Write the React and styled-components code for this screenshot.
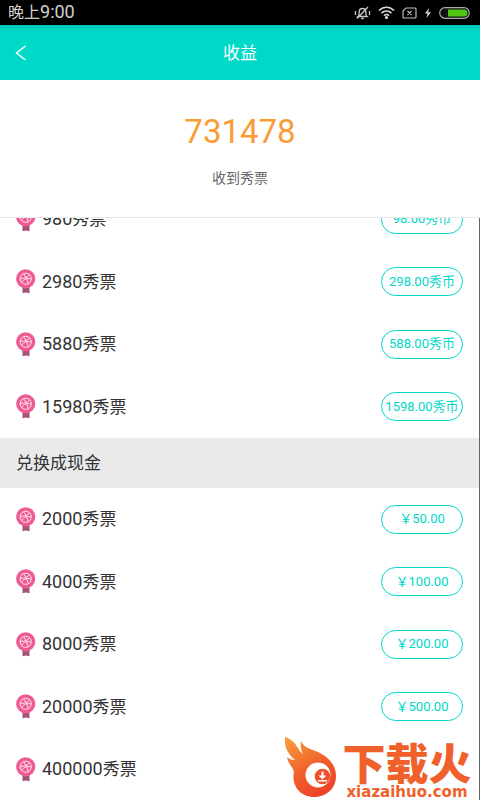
// App.jsx
import React, { useLayoutEffect, useRef } from 'react';
import styled, { createGlobalStyle } from 'styled-components';

const TEAL = '#00d8c8';

const coinRows = [
  { tickets: 980, price: '98.00秀币' },
  { tickets: 2980, price: '298.00秀币' },
  { tickets: 5880, price: '588.00秀币' },
  { tickets: 15980, price: '1598.00秀币' },
];

const cashRows = [
  { tickets: 2000, price: '￥50.00' },
  { tickets: 4000, price: '￥100.00' },
  { tickets: 8000, price: '￥200.00' },
  { tickets: 20000, price: '￥500.00' },
  { tickets: 400000, price: '￥10000.00' },
];

const GlobalStyle = createGlobalStyle`
  * {
    box-sizing: border-box;
  }

  body {
    margin: 0;
    background: #fff;
    color: #333;
    font-family: Roboto, 'Noto Sans CJK SC', sans-serif;
  }

  h1, h2, p, ul {
    margin: 0;
    padding: 0;
    font-weight: 400;
  }
`;

const Screen = styled.div`
  display: flex;
  flex-direction: column;
  height: 100vh;
  overflow: hidden;
`;

const StatusBar = styled.div`
  display: flex;
  align-items: center;
  justify-content: space-between;
  flex: none;
  height: 25px;
  padding: 0 10px 0 8px;
  background: #000;
  color: #d4d0ce;
  font-size: 16px;
  line-height: 24px;
`;

const StatusIcons = styled.div`
  display: flex;
  align-items: center;
  gap: 7px;

  svg {
    display: block;
  }
`;

/* numerals run a touch larger than the Chinese text beside them */
const Digits = styled.span`
  font-size: 18px;
`;

const Header = styled.header`
  display: grid;
  grid-template-columns: 44px 1fr 44px;
  align-items: center;
  flex: none;
  height: 55px;
  background: linear-gradient(#00c9b9, ${TEAL} 6px);
  color: #fff;

  h1 {
    font-size: 17px;
    line-height: 24px;
    text-align: center;
  }
`;

const BackButton = styled.button`
  display: flex;
  align-items: center;
  height: 44px;
  padding: 0 0 0 15px;
  border: 0;
  background: none;
  color: inherit;
`;

const Summary = styled.section`
  display: flex;
  flex-direction: column;
  align-items: center;
  flex: none;
  gap: 16px;
  height: 138px;
  padding-top: 32px;
  border-bottom: 1px solid #e8e8e8;
`;

const Total = styled.p`
  color: #fb9b36;
  font-size: 33px;
  line-height: 40px;
`;

const Caption = styled.p`
  color: #666;
  font-size: 14px;
  line-height: 20px;
`;

const Scroller = styled.main`
  flex: 1;
  min-height: 0;
  overflow-y: auto;
  border-right: 1px solid #666;
  scrollbar-width: none;
`;

const List = styled.ul`
  list-style: none;
`;

const Row = styled.li`
  display: flex;
  align-items: center;
  gap: 6px;
  height: 62px;
  padding: 0 16px;

  &:nth-child(even) {
    height: 63px;
  }
`;

const Amount = styled.span`
  flex: 1;
  font-size: 17px;
  line-height: 24px;
`;

const PriceButton = styled.button`
  flex: none;
  width: 82px;
  height: 29px;
  padding: 0;
  border: 1px solid ${TEAL};
  border-radius: 15px;
  background: #fff;
  color: ${TEAL};
  font-family: inherit;
  font-size: 13px;
  line-height: 20px;
  white-space: nowrap;
`;

const SectionTitle = styled.h2`
  height: 50px;
  padding: 0 16px;
  background: #eaeaea;
  font-size: 17px;
  line-height: 50px;
`;

const Watermark = styled.div`
  position: absolute;
  right: 6px;
  bottom: 0;
  display: flex;
  align-items: flex-end;
  height: 66px;
  background: rgba(255, 255, 255, 0.94);
`;

const Brand = styled.div`
  display: flex;
  flex-direction: column;
  align-items: center;
  width: 134px;
  color: #f0602a;
`;

const BrandName = styled.div`
  height: 38px;
  font-size: 43px;
  font-weight: 900;
  line-height: 38px;
  white-space: nowrap;
`;

const BrandSite = styled.div`
  font-family: 'DejaVu Sans', sans-serif;
  font-size: 15px;
  font-weight: 700;
  line-height: 16px;
`;

function Medal() {
  return (
    <svg width="20" height="25" viewBox="0 0 20 25" aria-hidden="true">
      <path d="M6.500 16h7v8.200l-3.500-.8-3.500.8z" fill="#a4547a" />
      <circle cx="9.700" cy="9.800" r="9.600" fill="#ee5b93" />
      <g fill="none" stroke="#ffe3ee" strokeWidth="1">
        <circle cx="9.700" cy="9.800" r="5.600" />
        <path d="M4.200 9.300c4.500.3 8-1 9.500-4M7.500 4.700c2.500 3 4 6.300 4.600 10M5.700 13.800c1.500-3.600 5-5 9.500-3.800" />
      </g>
    </svg>
  );
}

function PhoneStatus() {
  return (
    <StatusIcons aria-hidden="true">
      <svg width="17" height="14" viewBox="0 0 17 14" fill="none" stroke="#c8c8c8" strokeWidth="1.300">
        <path d="M4 10.500h9c-1.300-1-1.200-2.500-1.200-4.500 0-2.200-1.400-3.500-3.300-3.500S5.200 3.800 5.200 6c0 2 .1 3.500-1.200 4.500zM7.300 12.500h2.400M14 1 3 12.500M1.500 5v4M15.500 5v4" />
      </svg>
      <svg width="17" height="13" viewBox="0 0 17 13" fill="none" stroke="#d8d8d8" strokeWidth="1.600">
        <path d="M1 4.500c4.500-4.300 10.500-4.300 15 0M3.500 7.200c3-2.900 7-2.900 10 0M6 9.700c1.500-1.500 3.500-1.500 5 0" />
        <circle cx="8.500" cy="11.500" r=".8" fill="#d8d8d8" />
      </svg>
      <svg width="15" height="12" viewBox="0 0 15 12" fill="none" stroke="#bdbdbd" strokeWidth="1.200">
        <path d="M4 1h9q1 0 1 1v8q0 1-1 1H2q-1 0-1-1V4zM5.500 4l4 4M9.500 4l-4 4" />
      </svg>
      <svg width="8" height="12" viewBox="0 0 8 12" fill="#d0d0d0">
        <path d="M5 1 1 6.500h2.500L2.500 11 7 5.200H4.300z" />
      </svg>
      <svg width="31" height="12" viewBox="0 0 31 12">
        <rect x=".7" y=".7" width="29.600" height="10.600" rx="5.300" fill="#111" stroke="#aaa" strokeWidth="1.200" />
        <path d="M9 2.500h16a3.500 3.500 0 0 1 0 7H9z" fill="#4fc614" />
      </svg>
    </StatusIcons>
  );
}

function FlameLogo() {
  return (
    <svg width="60" height="66" viewBox="0 0 60 66" aria-hidden="true">
      <defs>
        <linearGradient id="flame" x1="0" y1="0" x2=".5" y2="1">
          <stop offset="0" stopColor="#f9a13c" />
          <stop offset=".6" stopColor="#f0622c" />
          <stop offset="1" stopColor="#ee4529" />
        </linearGradient>
      </defs>
      <path
        d="M5 3C4 13 8 20 15 26 12 26 9 25 7 23c1 7 6 10 7 15-3 13 6 25 20 25 13 0 22-9 22-21C56 30 47 22 38 18 31 15 24 14 21 7c-1 5 0 9 2 13C18 17 17 7 5 3z"
        fill="url(#flame)"
      />
      <circle cx="38" cy="41" r="12.500" fill="#fff" />
      <circle cx="42.500" cy="42.500" r="7.800" fill="#ef522b" />
      <path d="M41.500 37.500h2v4h3l-4 4-4-4h3zM38 46h9v1.500h-9z" fill="#fff" />
    </svg>
  );
}

function TicketList({ rows }) {
  return (
    <List>
      {rows.map((row) => (
        <Row key={row.tickets}>
          <Medal />
          <Amount>
            <Digits>{row.tickets}</Digits>秀票
          </Amount>
          <PriceButton type="button">{row.price}</PriceButton>
        </Row>
      ))}
    </List>
  );
}

export default function App() {
  const scroller = useRef(null);

  // open the list slightly scrolled, under the summary
  useLayoutEffect(() => {
    scroller.current.scrollTop = 30;
  }, []);

  return (
    <>
      <GlobalStyle />
      <Screen>
        <StatusBar>
          <span>
            晚上<Digits>9:00</Digits>
          </span>
          <PhoneStatus />
        </StatusBar>
        <Header>
          <BackButton type="button" aria-label="返回">
            <svg width="12" height="16" viewBox="0 0 12 16" fill="none" stroke="currentColor" strokeWidth="1.500">
              <path d="M10.500 1 1.500 8l9 7" />
            </svg>
          </BackButton>
          <h1>收益</h1>
        </Header>
        <Summary>
          <Total>731478</Total>
          <Caption>收到秀票</Caption>
        </Summary>
        <Scroller ref={scroller}>
          <TicketList rows={coinRows} />
          <SectionTitle>兑换成现金</SectionTitle>
          <TicketList rows={cashRows} />
        </Scroller>
        <Watermark>
          <FlameLogo />
          <Brand>
            <BrandName>下载火</BrandName>
            <BrandSite>xiazaihuo.com</BrandSite>
          </Brand>
        </Watermark>
      </Screen>
    </>
  );
}
